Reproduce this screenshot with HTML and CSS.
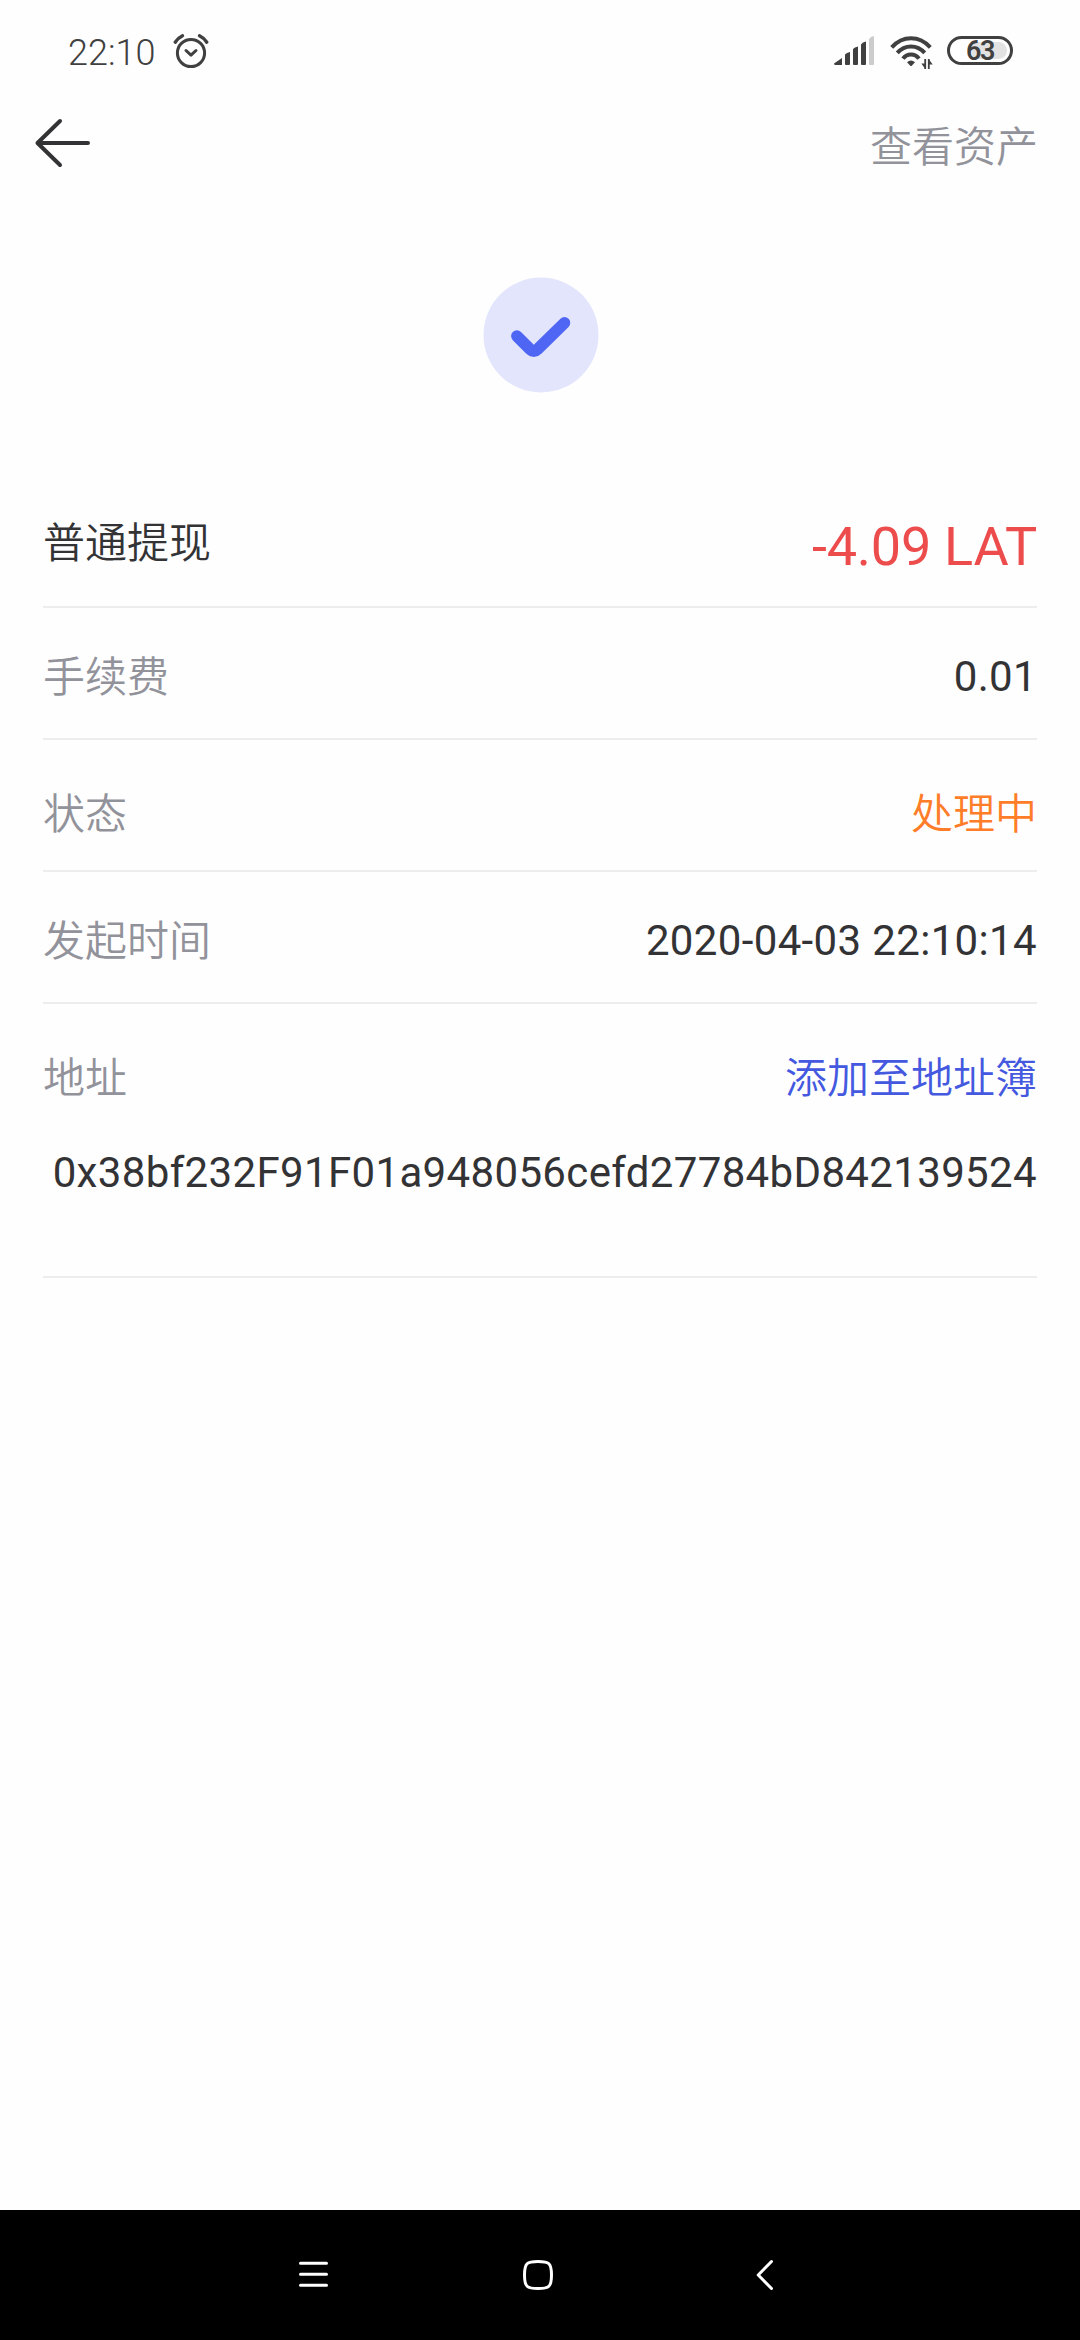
FILE: index.html
```html
<!DOCTYPE html>
<html lang="zh-CN">
<head>
<meta charset="utf-8">
<title>提现详情</title>
<link rel="stylesheet" href="styles.css">
</head>
<body>
<div class="screen">
  <header class="status-bar">
    <div class="status-left">
      <span class="clock">22:10</span>
      <svg class="alarm" width="38" height="38" viewBox="0 0 38 38" fill="none" stroke="#404040" stroke-width="3" stroke-linecap="round" stroke-linejoin="round">
        <circle cx="19" cy="21" r="13.6"/>
        <path d="M14 18.5l5 4.7 5-4.7"/>
        <path d="M3.2 10.2Q6 6 10.5 3.8M27.5 3.8Q32 6 34.8 10.2" stroke-width="3.4"/>
      </svg>
    </div>
    <div class="status-right">
      <svg class="signal" width="40" height="30" viewBox="0 0 40 30" fill="#404040">
        <path d="M0 27.4L8 22v7H1.5Q0 29 0 27.4zM11 18.6Q12.5 16.6 16 16v12q0 1-1 1h-3q-1 0-1-1zM19 13Q20.5 11 24 10.400v17.600q0 1-1 1h-3q-1 0-1-1zM27 8.500Q28.500 6 32 5.500v22.500q0 1-1 1h-3q-1 0-1-1z"/>
        <path fill="#ccc" d="M35 3Q36.500 .5 40 0v28q0 1-1 1h-3q-1 0-1-1z"/>
      </svg>
      <svg class="wifi" width="44" height="36" viewBox="0 0 44 36" fill="none" stroke="#404040">
        <path d="M1.700 11.300Q10 2.200 21 2.200T40.300 11.300" stroke-width="4"/>
        <path d="M7.300 16.900Q13 10.400 21 10.400T34.700 16.900" stroke-width="4"/>
        <path d="M13 22.600Q16 18.400 21 18.400T29 22.600" stroke-width="4"/>
        <path fill="#404040" stroke="none" d="M17 26.300Q21 22.500 25 26.300L22 29.500Q21 30.500 20 29.500z"/>
        <path d="M35.200 23v10M38.800 23v10" stroke-width="1.800"/>
        <path fill="#404040" stroke="none" d="M35 32.500L31.300 27.500h3.700zM39 23.500l3.700 5h-3.700z"/>
      </svg>
      <div class="battery"><span class="battery-level"></span><span class="battery-text">63</span></div>
    </div>
  </header>

  <nav class="title-bar">
    <svg class="back" width="56" height="50" viewBox="0 0 56 50" fill="none" stroke="#333335" stroke-width="4" stroke-linecap="round" stroke-linejoin="round">
      <path d="M26 3L3.500 25 26 47M3.500 25H54"/>
    </svg>
    <a class="assets">查看资产</a>
  </nav>

  <div class="result">
    <svg width="116" height="116" viewBox="482.500 276.500 116 116">
      <circle cx="540.500" cy="334.500" r="57.500" fill="#e2e5fb"/>
      <path fill="#4f66f5" d="M512.300 339.700L525.500 352.900Q533.300 360.300 541.100 352.900L568.070 326.400A5.760 5.760 0 0 0 559.930 318.200L533.300 344.300 520.500 331.500A5.760 5.760 0 0 0 512.300 339.700z"/>
    </svg>
  </div>

  <main class="details">
    <section class="row row-type"><span class="name">普通提现</span><span class="amount">-4.09 LAT</span></section>
    <section class="row row-fee"><span class="label">手续费</span><span class="value">0.01</span></section>
    <section class="row row-status"><span class="label">状态</span><span class="pending">处理中</span></section>
    <section class="row row-time"><span class="label">发起时间</span><span class="value">2020-04-03 22:10:14</span></section>
    <section class="row row-address">
      <span class="label">地址</span><a class="link">添加至地址簿</a>
      <span class="value address">0x38bf232F91F01a948056cefd27784bD842139524</span>
    </section>
  </main>

  <footer class="nav-bar">
    <svg width="32" height="32" viewBox="0 0 32 32" fill="none" stroke="#fff" stroke-width="3" stroke-linecap="round"><path d="M3.500 4.300h26M3.500 15.300h26M3.500 26.300h26"/></svg>
    <svg width="32" height="32" viewBox="0 0 32 32" fill="none" stroke="#fff" stroke-width="3"><path d="M16 2.500C27 2.500 29.500 4 29.500 16S27 29.500 16 29.500 2.500 28 2.500 16 5 2.500 16 2.500z"/></svg>
    <svg width="32" height="32" viewBox="0 0 32 32" fill="none" stroke="#fff" stroke-width="3" stroke-linecap="round" stroke-linejoin="round"><path d="M24.500 2.500L11.200 16 24.500 29.500"/></svg>
  </footer>
</div>
</body>
</html>
```

FILE: styles.css
```css
* { box-sizing: border-box; }
body { margin: 0; background: #fefefe; }
svg { display: block; flex: none; }

.screen {
  display: flex;
  flex-direction: column;
  width: 1080px;
  height: 2340px;
  font-family: Roboto, "Noto Sans CJK SC", sans-serif;
  font-size: 42px;
  line-height: 60px;
  font-weight: 400;
  color: #333335;
}

.status-bar {
  display: flex;
  justify-content: space-between;
  height: 96px;
  padding: 0 67px 0 68px;
}
.status-left { display: flex; }
.clock {
  width: 104px;
  padding-top: 23px;
  font-size: 36px;
  font-weight: 350;
  color: #404040;
}
.alarm { margin-top: 32px; }
.status-right { display: flex; padding-top: 36px; }
.wifi { margin-left: 16px; }
.battery {
  position: relative;
  width: 66px;
  height: 29px;
  margin-left: 13px;
  border: 3px solid #404040;
  border-radius: 15px;
}
.battery-level {
  position: absolute;
  top: 3px;
  right: 3px;
  width: 35px;
  height: 17px;
  border-radius: 0 9px 9px 0;
  background: #e2e2e2;
}
.battery-text {
  position: absolute;
  inset: 0;
  font-size: 27px;
  line-height: 24px;
  font-weight: 600;
  letter-spacing: -1.5px;
  text-align: center;
  color: #404040;
}

.title-bar {
  display: flex;
  justify-content: space-between;
  height: 96px;
  padding: 0 42px 0 34px;
}
.back { margin-top: 22px; }
.assets { padding-top: 22px; color: #92929b; font-weight: 350; }

.result {
  display: flex;
  justify-content: center;
  height: 284px;
  padding-top: 85px;
  padding-left: 1px;
}

.details { flex: 1; padding: 0 43px; }
.row {
  display: flex;
  flex-wrap: wrap;
  align-content: flex-start;
  justify-content: space-between;
  height: 132px;
  border-bottom: 2px solid #ededed;
}
.name, .label, .pending, .link { padding-top: 1px; font-weight: 350; }
.label { color: #92929b; }
.value { letter-spacing: .35px; }
.pending { color: #ff7d29; }
.link { color: #4459e0; }
.amount { padding-top: 4px; font-size: 54px; letter-spacing: -.25px; color: #ed4c4c; }
.row-type { padding-top: 37px; }
.row-fee { padding-top: 39px; }
.row-status { padding-top: 44px; }
.row-time { padding-top: 39px; }
.row-address { height: 274px; padding-top: 44px; }
.address { width: 100%; padding-top: 34px; text-align: right; }

.nav-bar {
  display: flex;
  gap: 193px;
  height: 130px;
  padding: 49px 0 0 297px;
  background: #000;
}
```
